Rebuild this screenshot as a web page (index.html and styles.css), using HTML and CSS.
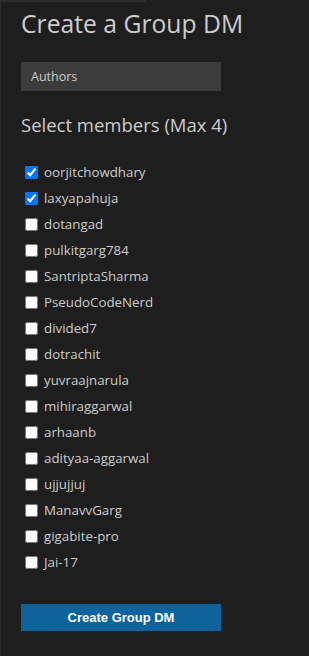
FILE: index.html
```html
<!DOCTYPE html>
<html lang="en">
<head>
    <meta charset="UTF-8">
    <meta name="viewport" content="width=device-width, initial-scale=1.0">
    <title>Create a Group DM</title>
    <link rel="stylesheet" href="styles.css">
</head>
<body>
    <div class="top-strip"></div>

    <h1>Create a Group DM</h1>

    <input class="group-name" type="text" value="Authors" aria-label="Group name">

    <h2>Select members (Max 4)</h2>

    <ul class="member-list">
        <li><label><input type="checkbox" checked> oorjitchowdhary</label></li>
        <li><label><input type="checkbox" checked> laxyapahuja</label></li>
        <li><label><input type="checkbox"> dotangad</label></li>
        <li><label><input type="checkbox"> pulkitgarg784</label></li>
        <li><label><input type="checkbox"> SantriptaSharma</label></li>
        <li><label><input type="checkbox"> PseudoCodeNerd</label></li>
        <li><label><input type="checkbox"> divided7</label></li>
        <li><label><input type="checkbox"> dotrachit</label></li>
        <li><label><input type="checkbox"> yuvraajnarula</label></li>
        <li><label><input type="checkbox"> mihiraggarwal</label></li>
        <li><label><input type="checkbox"> arhaanb</label></li>
        <li><label><input type="checkbox"> adityaa-aggarwal</label></li>
        <li><label><input type="checkbox"> ujjujjuj</label></li>
        <li><label><input type="checkbox"> ManavvGarg</label></li>
        <li><label><input type="checkbox"> gigabite-pro</label></li>
        <li><label><input type="checkbox"> Jai-17</label></li>
    </ul>

    <button class="create-button">Create Group DM</button>
</body>
</html>
```

FILE: styles.css
```css
html {
    background-color: #1e1e1e;
}

body {
    margin: 0;
    padding: 0 20px;
    min-height: 656px;
    box-sizing: border-box;
    border-left: 1px solid #2b2b2b;
    background-color: #1e1e1e;
    color: #cccccc;
    font-family: "Open Sans", "Noto Sans", sans-serif;
    font-size: 13px;
}

.top-strip {
    width: 146px;
    height: 2px;
    margin-left: -21px;
    background-color: #2d2d2d;
}

h1 {
    margin: 7px 0 0;
    font-size: 24.7px;
    line-height: 30px;
    font-weight: 400;
    color: #cccccc;
}

.group-name {
    display: block;
    box-sizing: border-box;
    width: 200px;
    height: 29px;
    margin-top: 23px;
    padding: 0 10px;
    border: none;
    outline: none;
    background-color: #3c3c3c;
    color: #cccccc;
    font-family: inherit;
    font-size: 12.5px;
}

h2 {
    margin: 21px 0 0;
    font-size: 18.5px;
    line-height: 26px;
    font-weight: 400;
    color: #cccccc;
}

.member-list {
    list-style: none;
    padding: 0;
    margin: 21px 0 0;
    font-size: 13.3px;
}

.member-list li {
    height: 26px;
}

.member-list label {
    display: flex;
    align-items: center;
    height: 26px;
    gap: 3px;
    cursor: pointer;
}

.member-list input {
    width: 13px;
    height: 13px;
    margin: 0 3px 0 4px;
}

.create-button {
    display: block;
    width: 200px;
    height: 27px;
    margin-top: 29px;
    border: none;
    background-color: #0e639c;
    color: #ffffff;
    font-family: "Liberation Sans", Arial, sans-serif;
    font-size: 13px;
    font-weight: 700;
    cursor: pointer;
}
```
